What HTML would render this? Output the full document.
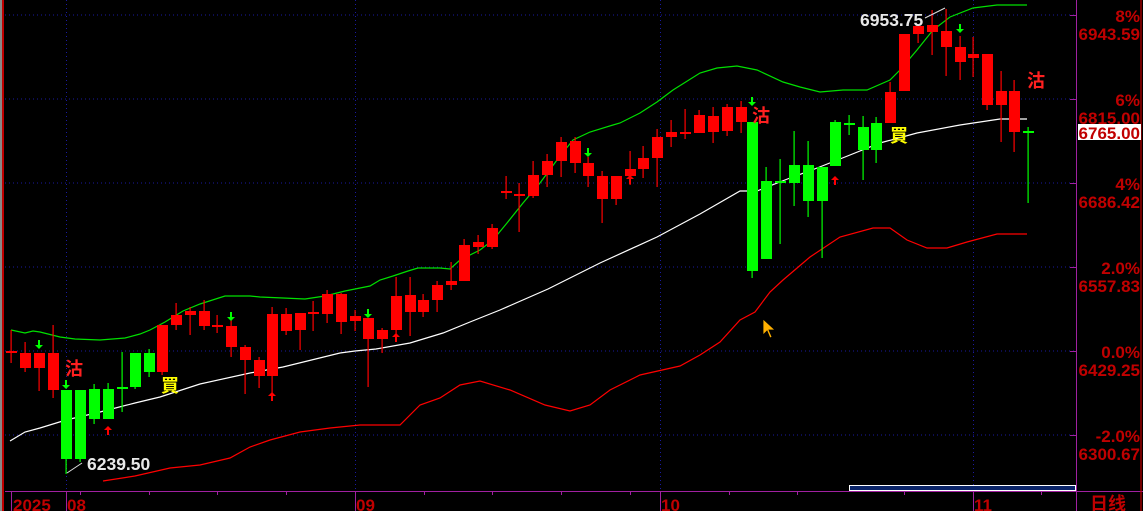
<!DOCTYPE html>
<html><head><meta charset="utf-8"><style>
html,body{margin:0;padding:0;background:#000;width:1143px;height:511px;overflow:hidden}
svg{display:block}
.ax{font-family:"Liberation Sans",sans-serif;font-weight:bold;font-size:17px;fill:#c00000}
.cj{font-family:"Liberation Sans","Noto Sans CJK SC",sans-serif;font-size:18px;font-weight:bold}
</style></head><body>
<svg id="s" width="1143" height="511" xmlns="http://www.w3.org/2000/svg">
<rect width="1143" height="511" fill="#000"/>
<rect x="0" y="0" width="2" height="511" fill="#888"/>
<rect x="2" y="0" width="2" height="511" fill="#c00000"/>
<g stroke="#1a1aa0" stroke-dasharray="1,3" stroke-width="1">
<line x1="5" y1="15" x2="1076" y2="15"/><line x1="5" y1="99" x2="1076" y2="99"/>
<line x1="5" y1="183" x2="1076" y2="183"/><line x1="5" y1="267" x2="1076" y2="267"/>
<line x1="5" y1="351" x2="1076" y2="351"/><line x1="5" y1="435" x2="1076" y2="435"/>
<line x1="66.5" y1="0" x2="66.5" y2="491"/><line x1="355.5" y1="0" x2="355.5" y2="491"/>
<line x1="660.5" y1="0" x2="660.5" y2="491"/><line x1="973.5" y1="0" x2="973.5" y2="491"/>
</g>
<g fill="none" stroke-width="1.2">
<polyline stroke="#00e000" points="11,330 25,333 33,331 40,332 60,337 75,339 100,340 125,338 140,334 150,330 165,322 183,311 200,304 225,296 250,296 260,297 283,298 305,299 325,296 345,291 370,286 380,280 393,276 408,271 418,268 430,268 440,268 450,269 460,260 480,250 493,240 507,223 523,203 540,183 557,160 573,140 590,132 613,125 620,123 640,113 657,102 673,90 700,73 717,68 737,66 757,70 783,82 800,87 820,92 843,90 867,90 890,80 900,70 917,50 933,30 950,17 973,8 997,5 1027,5"/>
<polyline stroke="#ffffff" points="10,441 25,432 40,428 66,420 100,412 135,403 160,397 200,384 250,373 283,367 340,353 355,351 376,349 410,343 443,333 470,322 500,310 548,289 600,263 657,237 700,214 740,191 757,191 790,178 812,170 845,157 880,143 917,133 960,125 1000,119 1027,119"/>
<polyline stroke="#ff0000" points="103,481 135,476 170,468 200,465 230,458 250,447 270,440 300,432 330,428 360,425 400,425 420,405 440,398 460,385 480,381 510,390 545,405 570,411 590,405 610,390 640,375 680,366 700,355 720,342 740,320 755,312 770,292 783,280 810,257 840,237 873,228 890,228 907,240 927,248 947,248 967,242 997,234 1027,234"/>
</g>
<g id="c"></g>
<polygon points="763,319 763,335 767,331 770,338 772,337 769,330 775,330" fill="#ffb000" stroke="#000" stroke-width="0.8"/>
<polyline points="67,473 82,463" stroke="#ddd" fill="none"/>
<polyline points="925,18 945,8" stroke="#ddd" fill="none"/>
<text x="87" y="470" fill="#e8e8e8" font-family="Liberation Sans,sans-serif" font-weight="bold" font-size="17.5">6239.50</text>
<text x="860" y="26" fill="#e8e8e8" font-family="Liberation Sans,sans-serif" font-weight="bold" font-size="17.5">6953.75</text>
<text x="65" y="375" class="cj" fill="#ff2020">沽</text>
<text x="752" y="122" class="cj" fill="#ff2020">沽</text>
<text x="1027" y="87" class="cj" fill="#ff2020">沽</text>
<text x="161" y="392" class="cj" fill="#ffff00">買</text>
<text x="890" y="142" class="cj" fill="#ffff00">買</text>
<line x1="1076.5" y1="0" x2="1076.5" y2="511" stroke="#a020a0"/>
<line x1="5" y1="491.5" x2="1143" y2="491.5" stroke="#a020a0"/>
<g stroke="#a020a0"><line x1="1070" y1="15.5" x2="1076" y2="15.5"/><line x1="1070" y1="99.5" x2="1076" y2="99.5"/><line x1="1070" y1="183.5" x2="1076" y2="183.5"/><line x1="1070" y1="267.5" x2="1076" y2="267.5"/><line x1="1070" y1="351.5" x2="1076" y2="351.5"/><line x1="1070" y1="435.5" x2="1076" y2="435.5"/>
<line x1="11.5" y1="491" x2="11.5" y2="511"/><line x1="66.5" y1="491" x2="66.5" y2="511"/><line x1="355.5" y1="491" x2="355.5" y2="511"/><line x1="660.5" y1="491" x2="660.5" y2="511"/><line x1="973.5" y1="491" x2="973.5" y2="511"/>
<line x1="80.5" y1="491" x2="80.5" y2="495"/><line x1="149.5" y1="491" x2="149.5" y2="495"/><line x1="217.5" y1="491" x2="217.5" y2="495"/><line x1="286.5" y1="491" x2="286.5" y2="495"/><line x1="424.5" y1="491" x2="424.5" y2="495"/><line x1="492.5" y1="491" x2="492.5" y2="495"/><line x1="561.5" y1="491" x2="561.5" y2="495"/><line x1="630.5" y1="491" x2="630.5" y2="495"/><line x1="729.5" y1="491" x2="729.5" y2="495"/><line x1="797.5" y1="491" x2="797.5" y2="495"/><line x1="904.5" y1="491" x2="904.5" y2="495"/><line x1="1041.5" y1="491" x2="1041.5" y2="495"/></g>
<rect x="849.5" y="485.5" width="226" height="5" fill="#0a2468" stroke="#fff"/>
<rect x="1140" y="0" width="2" height="511" fill="#c00000" opacity="0.6"/>
<g class="ax" text-anchor="end">
<text x="1140" y="22">8%</text><text x="1140" y="40">6943.59</text>
<text x="1140" y="106">6%</text><text x="1140" y="124">6815.00</text>
<text x="1140" y="190">4%</text><text x="1140" y="208">6686.42</text>
<text x="1140" y="274">2.0%</text><text x="1140" y="292">6557.83</text>
<text x="1140" y="358">0.0%</text><text x="1140" y="376">6429.25</text>
<text x="1140" y="442">-2.0%</text><text x="1140" y="460">6300.67</text>
</g>
<rect x="1078" y="124" width="63" height="16" fill="#fff"/>
<text x="1140" y="139" class="ax" text-anchor="end" fill="#e00000">6765.00</text>
<g class="ax" font-size="17">
<text x="13" y="511">2025</text><text x="67" y="511">08</text><text x="356" y="511">09</text><text x="661" y="511">10</text><text x="974" y="511">11</text>
</g>
<text x="1090" y="510" class="cj" fill="#c00000" font-size="17" font-weight="normal">日线</text>
</svg>
<script>
var R="#ff0000",G="#00ff00";
var d=[[11,352,352,330,363,R],[25,353,368,342,372,R],[39,353,368,353,391,R],[53,353,390,325,398,R],
[66,390,459,390,474,G],[80,390,459,390,462,G],[94,389,419,384,424,G],[108,389,419,383,419,G],[122,388,388,352,412,G],[135,353,387,353,389,G],[149,353,372,349,377,G],[162,325,372,325,375,R],
[176,315,325,303,330,R],[190,311,315,307,335,R],[204,311,326,300,330,R],[217,326,326,315,333,R],[231,326,347,320,357,R],[245,347,360,345,394,R],[259,360,376,357,388,R],[272,314,376,307,397,R],[286,314,331,308,335,R],[300,313,330,313,350,R],[313,313,313,301,331,R],[327,294,314,290,323,R],[341,294,322,293,334,R],[355,316,321,310,331,R],[368,318,339,318,387,R],[382,330,339,328,353,R],[396,296,330,277,335,R],[410,295,312,277,336,R],[423,300,312,294,317,R],[437,285,300,281,312,R],[451,281,285,262,290,R],[464,245,281,239,281,R],
[478,242,247,235,254,R],[492,228,247,224,249,R],[506,192,192,176,199,R],[519,195,195,183,232,R],[533,175,196,161,198,R],[547,161,175,154,187,R],[561,142,161,137,177,R],[575,141,163,137,173,R],[588,163,176,157,187,R],[602,176,199,171,223,R],[616,176,199,176,205,R],[630,169,176,151,185,R],[643,158,169,146,178,R],[657,137,158,129,187,R],[671,132,137,120,147,R],[685,133,133,109,139,R],[699,115,133,110,133,R],[713,116,132,107,143,R],[727,107,131,104,136,R],[741,107,122,101,133,R],
[752,122,271,122,278,G],[766,181,259,167,259,G],[780,182,182,159,244,G],[794,165,183,131,206,G],[808,165,201,141,217,G],[822,167,201,167,258,G],[835,122,166,120,166,G],[849,124,124,115,135,G],[863,127,150,116,180,G],[876,123,150,117,163,G],
[890,92,123,82,123,R],[904,34,91,34,91,R],[918,26,34,26,43,R],[932,25,32,10,55,R],[946,31,47,9,76,R],[960,47,62,36,80,R],[973,54,58,37,77,R],[987,54,105,54,110,R],[1001,91,105,71,142,R],[1014,91,132,80,152,R],[1028,132,132,127,203,G]];
var h="";
d.forEach(function(c){var x=c[0],col=c[5];
h+='<rect x="'+(x-0.5)+'" y="'+c[3]+'" width="1.2" height="'+(c[4]-c[3])+'" fill="'+col+'"/>';
var bh=c[2]-c[1];if(bh<2){h+='<rect x="'+(x-5)+'" y="'+(c[1]-1)+'" width="11" height="2" fill="'+col+'"/>';}
else h+='<rect x="'+(x-5)+'" y="'+c[1]+'" width="11" height="'+bh+'" fill="'+col+'"/>';});
function dn(x,y,col){return '<path d="M'+(x-1)+' '+y+'h2v5h3l-4 4l-4 -4h3z" fill="'+col+'"/>';}
function up(x,y,col){return '<path d="M'+x+' '+y+'l4 4h-3v5h-2v-5h-3z" fill="'+col+'"/>';}
h+=dn(39,340,G)+dn(66,380,G)+dn(231,312,G)+dn(368,309,G)+dn(588,148,G)+dn(752,97,G)+dn(960,24,G);
h+=up(108,426,R)+up(272,392,R)+up(396,333,R)+up(630,175,R)+up(835,176,R);
document.getElementById("c").innerHTML=h;
</script>
</body></html>
